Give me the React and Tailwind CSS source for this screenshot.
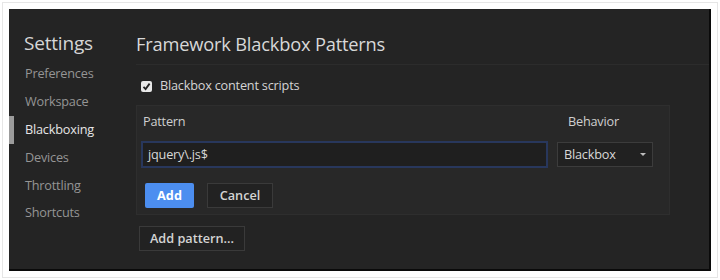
export default function App() {
  const items = ["Preferences", "Workspace", "Blackboxing", "Devices", "Throttling", "Shortcuts"];
  return (
    <div className="w-[720px] h-[280px] bg-white p-[2px]" style={{ fontFamily: '"Open Sans", "Noto Sans", sans-serif' }}>
      <div className="w-full h-full border border-[#e6e6e6] p-[6px]">
        <div className="w-[702px] h-[262px] bg-[#242424] border-r-2 border-b-2 border-[#0a0a0a] flex">
          <div className="w-[127px] shrink-0 flex flex-col pt-[21px]">
            <div className="pl-[15px] text-[19px] leading-[26px] text-[#d6d6d6] tracking-[-0.2px]">Settings</div>
            <div className="flex flex-col mt-[4px]">
              {items.map((it) => (
                <div key={it} className="flex h-[27.8px] items-center">
                  <div className={it === "Blackboxing" ? "w-[5px] h-[28px] bg-[#9c9c9c]" : "w-[5px]"} />
                  <div className={"pl-[11px] text-[12.7px] tracking-[-0.2px] " + (it === "Blackboxing" ? "text-[#e6e6e6]" : "text-[#959595]")}>{it}</div>
                </div>
              ))}
            </div>
          </div>
          <div className="flex-1 flex flex-col pt-[22px]">
            <div className="text-[18.3px] leading-[26px] text-[#d8d8d8] tracking-[-0.2px] pb-[7px] border-b border-[#2c2c2c]">Framework Blackbox Patterns</div>
            <div className="flex items-center h-[30px] mt-[6px] pl-[5px]">
              <div className="w-[11px] h-[11px] bg-[#e8e8e8] rounded-[2px] flex items-center justify-center">
                <svg width="9" height="9" viewBox="0 0 9 9"><path d="M1.5 4.8 L3.6 7 L7.6 1.6" stroke="#222" strokeWidth="1.8" fill="none" /></svg>
              </div>
              <span className="ml-[8px] text-[12.7px] text-[#d4d4d4] tracking-[-0.2px]">Blackbox content scripts</span>
            </div>
            <div className="mt-[4px] w-[534px] h-[110px] bg-[#282828] border border-[#2e2e2e] flex flex-col">
              <div className="flex h-[32px] items-center text-[12.7px] text-[#cfcfcf] tracking-[-0.2px]">
                <div className="w-[420px] pl-[6px]">Pattern</div>
                <div className="pl-[11px]">Behavior</div>
              </div>
              <div className="flex items-center mt-[3px]">
                <div className="ml-[4px] w-[407px] h-[27px] border-2 border-[#28375c] bg-[#1f1f1f] flex items-center pl-[5px] text-[12.7px] text-[#d8d8d8] tracking-[-0.2px]">jquery\.js$</div>
                <div className="ml-[9px] w-[96px] h-[25px] border border-[#3c3c3c] bg-[#212121] flex items-center justify-between pl-[6px] pr-[6px] text-[12.7px] text-[#d8d8d8] tracking-[-0.2px]">
                  <span>Blackbox</span>
                  <svg width="6" height="4" viewBox="0 0 6 4"><path d="M0 0 L6 0 L3 3 Z" fill="#bdbdbd" /></svg>
                </div>
              </div>
              <div className="flex mt-[15px] ml-[8px] gap-[13px]">
                <div className="w-[49px] h-[25px] rounded-[2px] bg-[#4c8ef0] text-white text-[12.7px] font-bold flex items-center justify-center">Add</div>
                <div className="w-[66px] h-[25px] border border-[#3a3a3a] bg-[#222222] text-[#d4d4d4] text-[12.7px] font-semibold flex items-center justify-center">Cancel</div>
              </div>
            </div>
            <div className="mt-[11px] ml-[3px] w-[106px] h-[25px] border border-[#3a3a3a] bg-[#222222] text-[#d4d4d4] text-[12.7px] font-semibold flex items-center justify-center">Add pattern...</div>
          </div>
        </div>
      </div>
    </div>
  );
}
